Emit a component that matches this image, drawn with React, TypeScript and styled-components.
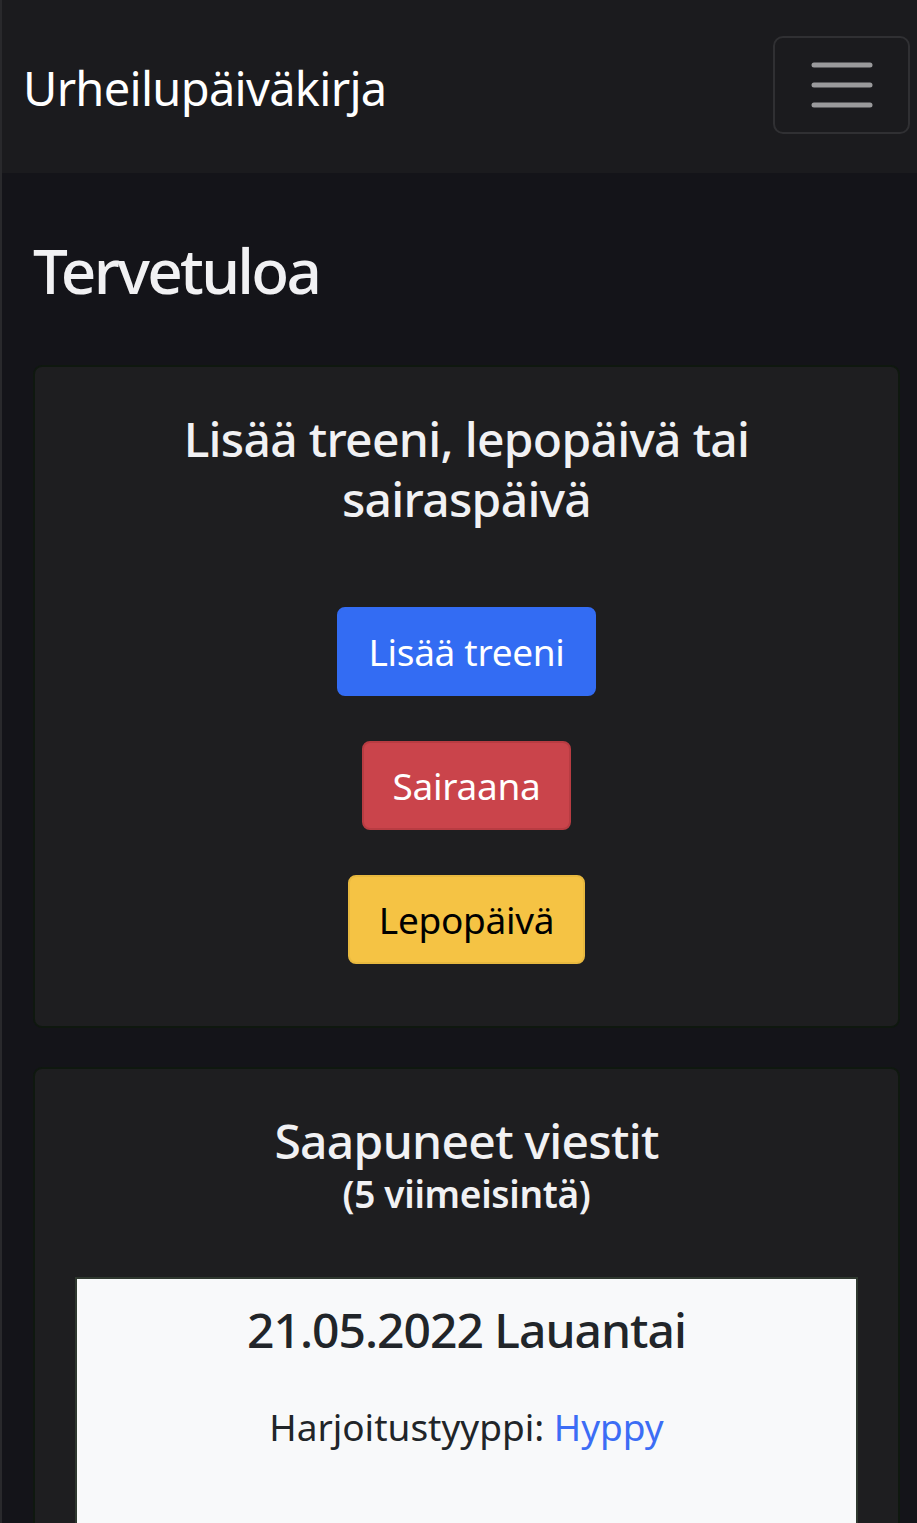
import React from "react";
import styled, { createGlobalStyle } from "styled-components";

const GlobalStyle = createGlobalStyle`
  html, body {
    margin: 0;
    padding: 0;
    background: #141419;
  }
  body {
    font-family: "Noto Sans", "Open Sans", Arial, sans-serif;
    color: #f1f1f3;
  }
  * { box-sizing: border-box; }
`;

const Clip = styled.div`
  overflow: hidden;
  height: 1523px;
`;

const Page = styled.div`
  min-height: 1523px;
  border-left: 2px solid #29292c;
  background: #141419;
`;

const Navbar = styled.nav`
  height: 173px;
  display: flex;
  align-items: center;
  justify-content: space-between;
  padding: 0 7px 4px 21px;
  background: #1b1b1e;
`;

const Brand = styled.a`
  margin-top: 8px;
  font-size: 47px;
  line-height: 1;
  color: #ffffff;
  text-decoration: none;
  letter-spacing: -0.7px;
`;

const Toggler = styled.button`
  width: 137px;
  height: 98px;
  border: 2px solid #303033;
  border-radius: 10px;
  background: transparent;
  display: flex;
  align-items: center;
  justify-content: center;
  padding: 0;
`;

const Main = styled.main`
  padding: 57px 17px 0 31px;
  display: flex;
  flex-direction: column;
  gap: 39px;
`;

const PageTitle = styled.h1`
  margin: 0 0 55px;
  font-size: 62px;
  line-height: 80px;
  font-weight: 500;
  letter-spacing: -2.7px;
  color: #f1f1f3;
`;

const Card = styled.section`
  background: #1e1e20;
  border: 2px solid #0f180f;
  border-radius: 9px;
  padding: 42px 40px 62px;
  display: flex;
  flex-direction: column;
  align-items: center;
`;

const CardTitle = styled.h2<{ $gap?: number }>`
  margin: 0 0 ${(p) => p.$gap ?? 0}px;
  font-size: 48px;
  line-height: 60px;
  font-weight: 500;
  letter-spacing: -0.7px;
  text-align: center;
  color: #f1f1f3;
  max-width: 600px;
`;

const SubTitle = styled.div`
  margin: 0 0 60px;
  font-size: 37px;
  line-height: 46px;
  font-weight: 600;
  letter-spacing: -0.3px;
  text-align: center;
  color: #f1f1f3;
`;

const ButtonStack = styled.div`
  display: flex;
  flex-direction: column;
  align-items: center;
  gap: 45px;
`;

const variants = {
  primary: { bg: "#336cf3", border: "#336cf3", color: "#ffffff" },
  danger: { bg: "#ca444b", border: "#b83c42", color: "#ffffff" },
  warning: { bg: "#f5c344", border: "#e8b93f", color: "#000000" },
};

const Button = styled.button<{ $variant: keyof typeof variants }>`
  font-family: inherit;
  font-size: 37px;
  line-height: 57px;
  letter-spacing: -0.3px;
  padding: 14px 29px;
  border-radius: 8px;
  border: 2px solid ${(p) => variants[p.$variant].border};
  background: ${(p) => variants[p.$variant].bg};
  color: ${(p) => variants[p.$variant].color};
`;

const MessageBox = styled.div`
  align-self: stretch;
  background: #f8f9fa;
  border: 2px solid #2f382f;
  min-height: 420px;
  padding: 21px 20px 40px;
  display: flex;
  flex-direction: column;
  align-items: center;
  gap: 38px;
`;

const MessageDate = styled.div`
  font-size: 48px;
  line-height: 60px;
  font-weight: 500;
  letter-spacing: -1px;
  color: #212529;
`;

const MessageLine = styled.div`
  font-size: 37px;
  line-height: 58px;
  color: #212529;
`;

const Accent = styled.span`
  color: #3c6df5;
`;

function HamburgerIcon() {
  return (
    <svg width="62" height="50" viewBox="0 0 62 50" aria-hidden="true">
      <g stroke="#9a9a9c" strokeWidth="5" strokeLinecap="round">
        <line x1="3" y1="5" x2="59" y2="5" />
        <line x1="3" y1="25" x2="59" y2="25" />
        <line x1="3" y1="45" x2="59" y2="45" />
      </g>
    </svg>
  );
}

export default function App() {
  return (
    <Clip>
      <GlobalStyle />
      <Page>
        <Navbar>
          <Brand href="#">Urheilupäiväkirja</Brand>
          <Toggler aria-label="Valikko">
            <HamburgerIcon />
          </Toggler>
        </Navbar>
        <Main>
          <div>
            <PageTitle>Tervetuloa</PageTitle>
            <Card>
              <CardTitle $gap={78}>Lisää treeni, lepopäivä tai sairaspäivä</CardTitle>
              <ButtonStack>
                <Button $variant="primary">Lisää treeni</Button>
                <Button $variant="danger">Sairaana</Button>
                <Button $variant="warning">Lepopäivä</Button>
              </ButtonStack>
            </Card>
          </div>
          <Card>
            <CardTitle>Saapuneet viestit</CardTitle>
            <SubTitle>(5 viimeisintä)</SubTitle>
            <MessageBox>
              <MessageDate>21.05.2022 Lauantai</MessageDate>
              <MessageLine>
                Harjoitustyyppi: <Accent>Hyppy</Accent>
              </MessageLine>
            </MessageBox>
          </Card>
        </Main>
      </Page>
    </Clip>
  );
}
